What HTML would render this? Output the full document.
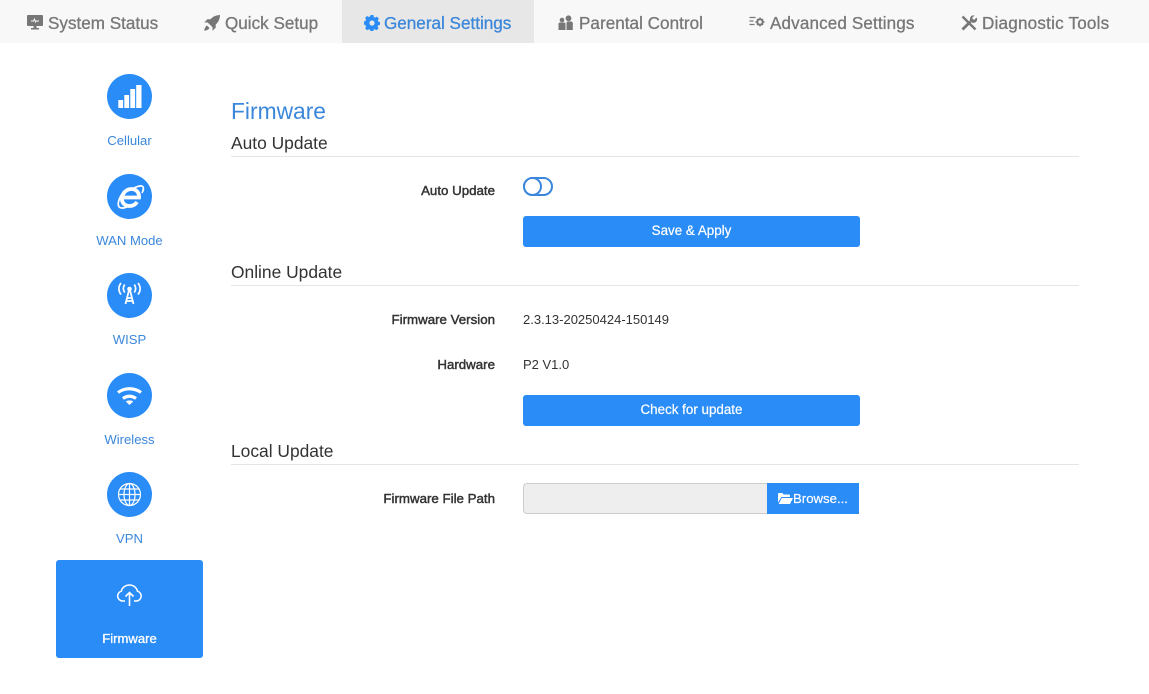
<!DOCTYPE html>
<html><head><meta charset="utf-8"><style>
*{box-sizing:border-box}
html,body{margin:0;padding:0;background:#fff;width:1149px;height:694px;overflow:hidden;font-family:"Liberation Sans",sans-serif}
.a{position:absolute;white-space:nowrap}
#nav{position:absolute;left:0;top:0;width:1149px;height:43px;background:#f8f8f8}
#act{position:absolute;left:342px;top:0;width:192px;height:43px;background:#e7e7e7}
.n{position:absolute;top:14px;font-size:17.1px;line-height:19px;color:#777;white-space:nowrap;-webkit-text-stroke:.3px currentColor}
.ni{position:absolute}
.c{position:absolute;left:107px;width:45px;height:45px;border-radius:50%;background:#2a8cf7}
.c svg{position:absolute;left:0;top:0}
.sl{position:absolute;left:56px;width:147px;text-align:center;font-size:13.1px;line-height:16px;color:#3b87db}
.h{position:absolute;left:231px;font-size:17.4px;line-height:20px;color:#333;white-space:nowrap}
.hr{position:absolute;left:231px;width:848px;height:1px;background:#e5e5e5}
.l{position:absolute;left:231px;width:264px;text-align:right;font-size:13.3px;line-height:16px;color:#333;white-space:nowrap;-webkit-text-stroke:.45px #333}
.v{position:absolute;left:523px;font-size:13px;line-height:16px;color:#333;white-space:nowrap}
.b{position:absolute;left:523px;width:337px;height:31px;background:#2a8cf7;border-radius:3px;color:#fff;font-size:13.4px;line-height:29px;text-align:center;-webkit-text-stroke:.2px #fff}
</style></head><body>
<div id="nav"></div><div id="act"></div>

<svg class="ni" style="left:27px;top:15px" width="16" height="16" viewBox="0 0 16 16"><path fill="#777" d="M1 0h14a1 1 0 0 1 1 1v9a1 1 0 0 1-1 1H9.500v2H12v1.500H4V13h2.500v-2H1a1 1 0 0 1-1-1V1a1 1 0 0 1 1-1z"/><path fill="none" stroke="#f8f8f8" stroke-width="1" d="M4 6h2.500l1-2 1 3 .7-1H12"/></svg>
<div class="n" style="left:48px">System Status</div>

<svg class="ni" style="left:204px;top:15px" width="16" height="16" viewBox="0 0 16 16"><path fill="#777" d="M16 0C12 .2 8.800 1.500 6.500 4.300H3.300L.3 7.500h3.400L8.500 12.300v3.400l3.200-3V9.500C14.500 7.200 15.800 4 16 0zM3 10.500c-1.300.6-2.300 2.500-2.800 5.300 2.800-.5 4.700-1.500 5.300-2.800z"/></svg>
<div class="n" style="left:225px">Quick Setup</div>

<svg class="ni" style="left:364px;top:15px" width="16" height="16" viewBox="0 0 16 16"><path fill="#2a8cf7" fill-rule="evenodd" d="M6.600 0h2.800l.4 2 1.300.6 1.800-1 2 2-1.100 1.700.6 1.300 1.600.5v2.800l-1.800.4-.6 1.300 1 1.700-2 2-1.700-1-1.300.5-.5 1.800H6.600l-.5-1.800-1.300-.5-1.700 1-2-2 1-1.700-.6-1.300L-.3 9.300V6.500l1.800-.5.6-1.300-1-1.700 2-2 1.700 1 1.300-.6zM8 5.400a2.600 2.600 0 1 0 0 5.200 2.600 2.600 0 0 0 0-5.200z"/></svg>
<div class="n" style="left:384px;color:#3b87db">General Settings</div>

<svg class="ni" style="left:557px;top:15px" width="17" height="16" viewBox="0 0 17 16"><circle cx="5" cy="5" r="2.300" fill="#777"/><circle cx="11.500" cy="3.300" r="2.900" fill="#777"/><path fill="#777" d="M1.500 9c0-1 .6-1.500 1.500-1.500h4c.9 0 1.500.5 1.500 1.500v6h-7zM9.500 8c0-1 .6-1.500 1.500-1.500h3c1 0 1.800.7 1.800 1.700V15H9.500z"/></svg>
<div class="n" style="left:579px;letter-spacing:.03px">Parental Control</div>

<svg class="ni" style="left:749px;top:15px" width="17" height="15" viewBox="0 0 17 15"><path stroke="#777" stroke-width="1.200" fill="none" d="M.5 2.500h6M.5 6h4M.5 9.500h5"/><circle cx="11" cy="7" r="2.700" fill="none" stroke="#777" stroke-width="2"/><path stroke="#777" stroke-width="1.400" d="M11 2.500v2M11 9.500v2M6.500 7h2M13.500 7h2M8 4l1.400 1.400M12.600 8.600 14 10M14 4l-1.400 1.400M9.400 8.600 8 10"/></svg>
<div class="n" style="left:770px;letter-spacing:.12px">Advanced Settings</div>

<svg class="ni" style="left:961px;top:15px" width="16" height="16" viewBox="0 0 16 16"><path stroke="#777" stroke-width="2.400" fill="none" d="M1.500 1.500 14.500 14.500"/><path stroke="#777" stroke-width="2.800" fill="none" d="M1.500 14.500 9.500 6.500"/><path fill="#777" d="M9 3.500A3.500 3.500 0 0 1 13.500.5L11 3l2 2 2.500-2.500A3.500 3.500 0 0 1 11 7.500L9 6z"/></svg>
<div class="n" style="left:982px;letter-spacing:.2px">Diagnostic Tools</div>

<!-- sidebar -->
<div class="c" style="top:74px"><svg width="45" height="45" viewBox="0 0 45 45"><path fill="#fff" d="M11.300 26h4.800v8h-4.800zM17.300 21h4.800v13h-4.800zM23.300 15h4.800v19h-4.800zM29.200 11h5.300v23h-5.300z"/></svg></div>
<div class="sl" style="top:133px">Cellular</div>

<div class="c" style="top:174px"><svg width="45" height="45" viewBox="0 0 45 45"><path fill="none" stroke="#fff" stroke-width="1.700" d="M15 20C11 26 10 32 13 33.500c3 1.500 7-.5 10-2.500M27 14c4-2 8-3 9-1s0 4-1 6"/><path fill="none" stroke="#fff" stroke-width="3.800" d="M17 23.500h15c.5-5-3-8.500-7.500-8.500-5 0-9 4-9.500 9-.5 5 3 8 7.500 8 3.500 0 6-1.500 7.500-4"/></svg></div>
<div class="sl" style="top:233px">WAN Mode</div>

<div class="c" style="top:273px"><svg width="45" height="45" viewBox="0 0 45 45"><circle cx="22.500" cy="16" r="2.300" fill="#fff"/><path fill="none" stroke="#fff" stroke-width="1.800" d="M21.800 18 18.500 31M23.200 18l3.300 13M20.300 25h4.400M19.500 28h6"/><path fill="none" stroke="#fff" stroke-width="1.700" d="M17.700 11.500c-1.700 2.500-1.700 5.500 0 8M27.300 11.500c1.700 2.500 1.700 5.500 0 8M14 10c-2.800 3.500-2.800 8 0 11.500M31 10c2.800 3.500 2.800 8 0 11.500"/></svg></div>
<div class="sl" style="top:332px">WISP</div>

<div class="c" style="top:373px"><svg width="45" height="45" viewBox="0 0 45 45"><path fill="none" stroke="#fff" stroke-width="3.200" d="M11 19.500c7-5 16-5 23 0M16 25.500c4-3 9-3 13 0"/><path fill="#fff" d="M22.500 32 18.800 28.500c2-1.500 5.400-1.500 7.400 0z"/></svg></div>
<div class="sl" style="top:432px">Wireless</div>

<div class="c" style="top:472px"><svg width="45" height="45" viewBox="0 0 45 45"><g fill="none" stroke="#fff" stroke-width="1.200"><circle cx="22.500" cy="22.500" r="11"/><ellipse cx="22.500" cy="22.500" rx="5.500" ry="11"/><path d="M22.500 11.500v22M11.500 22.500h22M13 17h19M13 28h19"/></g></svg></div>
<div class="sl" style="top:531px">VPN</div>

<div class="a" style="left:56px;top:560px;width:147px;height:98px;background:#2a8cf7;border-radius:3px"></div>
<svg class="a" style="left:116px;top:582px" width="27" height="25" viewBox="0 0 27 25"><path fill="none" stroke="#fff" stroke-width="1.500" d="M9 19H6.500a5 5 0 0 1-1.200-9.800C6 5.500 9.500 3 13.500 3s7 2.500 8 6.200a5 5 0 0 1-.9 9.800H18"/><path fill="none" stroke="#fff" stroke-width="1.600" d="M13.500 24V10.500M9.500 14.500l4-4 4 4"/></svg>
<div class="sl" style="top:631px;color:#fff;-webkit-text-stroke:.3px #fff">Firmware</div>

<!-- content -->
<div class="a" style="left:231px;top:98px;font-size:22.8px;line-height:26px;color:#3b87db">Firmware</div>
<div class="h" style="top:133px">Auto Update</div><div class="hr" style="top:156px"></div>
<div class="l" style="top:183px">Auto Update</div>
<div class="a" style="left:523px;top:177px;width:30px;height:19px;border:2px solid #3b87db;border-radius:10px"></div>
<div class="a" style="left:523px;top:177px;width:19px;height:19px;border:2px solid #3b87db;border-radius:50%;background:#fff"></div>
<div class="b" style="top:216px">Save &amp; Apply</div>

<div class="h" style="top:262px">Online Update</div><div class="hr" style="top:285px"></div>
<div class="l" style="top:312px">Firmware Version</div>
<div class="v" style="top:312px">2.3.13-20250424-150149</div>
<div class="l" style="top:357px">Hardware</div>
<div class="v" style="top:357px">P2 V1.0</div>
<div class="b" style="top:395px">Check for update</div>

<div class="h" style="top:441px">Local Update</div><div class="hr" style="top:464px"></div>
<div class="l" style="top:491px">Firmware File Path</div>
<div class="a" style="left:523px;top:483px;width:245px;height:31px;background:#eee;border:1px solid #ccc;border-right:0;border-radius:4px 0 0 4px"></div>
<div class="a" style="left:767px;top:483px;width:92px;height:31px;background:#2a8cf7"></div>
<svg class="a" style="left:778px;top:492px" width="15" height="13" viewBox="0 0 15 13"><path fill="#fff" d="M0 2a1 1 0 0 1 1-1h3.500l1 1.500H11a1 1 0 0 1 1 1V5H3.500L0 10.500z"/><path fill="#fff" d="M3.800 6H15l-3 6H.6z"/></svg>
<div class="a" style="left:793px;top:491px;font-size:13.2px;line-height:16px;color:#fff;-webkit-text-stroke:.2px #fff">Browse...</div>
</body></html>
